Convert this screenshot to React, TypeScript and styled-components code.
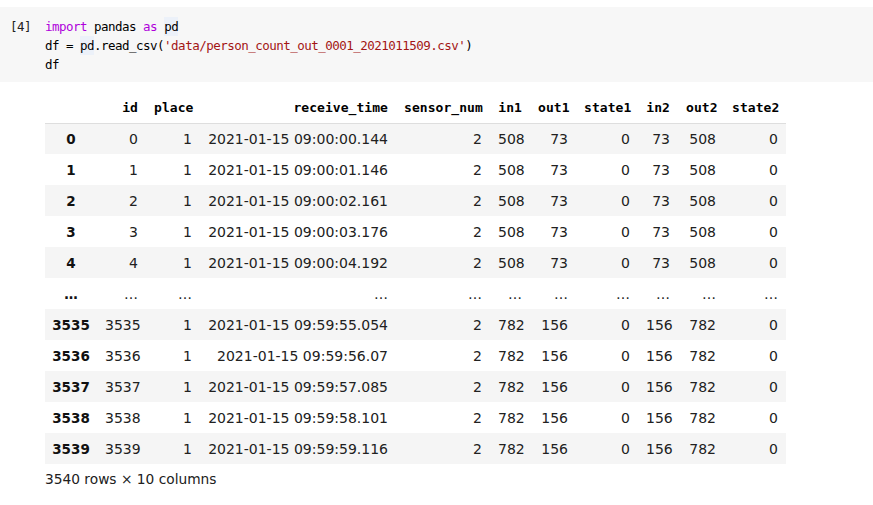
import React from "react";
import styled, { createGlobalStyle } from "styled-components";

const Global = createGlobalStyle`
  html, body { margin: 0; padding: 0; background: #ffffff; }
  body { font-family: "DejaVu Sans", Verdana, sans-serif; color: #212121; }
`;

const Page = styled.div`
  width: 873px;
  padding-top: 7px;
`;

const CodeCell = styled.div`
  display: flex;
  background: #f7f7f7;
  padding: 10px 0 8px 0;
`;

const Prompt = styled.div`
  width: 45px;
  box-sizing: border-box;
  padding-left: 10px;
  font-family: "DejaVu Sans Mono", "Liberation Mono", monospace;
  font-size: 12.5px;
  letter-spacing: -0.5px;
  line-height: 19px;
  color: #212121;
`;

const Code = styled.pre`
  margin: 0;
  font-family: "DejaVu Sans Mono", "Liberation Mono", monospace;
  font-size: 12.5px;
  letter-spacing: -0.52px;
  line-height: 19px;
  color: #000000;
`;

const Kw = styled.span`
  color: #af00db;
`;

const Str = styled.span`
  color: #a31515;
`;

const Mark = styled.span`
  background: #ecf1f9;
  padding: 2px 0;
`;

const Output = styled.div`
  padding-left: 45px;
  margin-top: 10px;
`;

const Table = styled.table`
  border-collapse: collapse;
  table-layout: fixed;
  width: 741px;
  font-size: 14px;
`;

const HeadCell = styled.th`
  height: 31px;
  padding: 0 8px;
  box-sizing: border-box;
  text-align: right;
  font-family: "DejaVu Sans Mono", "Liberation Mono", monospace;
  font-weight: bold;
  font-size: 13px;
  letter-spacing: 0.05px;
  color: #000000;
  border-bottom: 1px solid #dedede;
  white-space: nowrap;
`;

const Row = styled.tr`
  height: 31px;
  &:nth-child(odd) {
    background: #f5f5f5;
  }
`;

const IndexCell = styled.th`
  padding: 0;
  text-align: center;
  font-weight: bold;
  font-size: 13.5px;
  color: #111111;
  white-space: nowrap;
`;

const Cell = styled.td`
  padding: 0 8px;
  text-align: right;
  font-size: 14px;
  color: #212121;
  white-space: nowrap;
`;

const Footer = styled.div`
  margin-top: 6px;
  font-size: 13.75px;
  color: #212121;
  line-height: 18px;
`;

const widths = [52, 49, 54, 196, 94, 40, 46, 62, 40, 46, 62];
const headers = ["", "id", "place", "receive_time", "sensor_num", "in1", "out1", "state1", "in2", "out2", "state2"];

type R = { idx: string; cells: string[] };

const rows: R[] = [
  { idx: "0", cells: ["0", "1", "2021-01-15 09:00:00.144", "2", "508", "73", "0", "73", "508", "0"] },
  { idx: "1", cells: ["1", "1", "2021-01-15 09:00:01.146", "2", "508", "73", "0", "73", "508", "0"] },
  { idx: "2", cells: ["2", "1", "2021-01-15 09:00:02.161", "2", "508", "73", "0", "73", "508", "0"] },
  { idx: "3", cells: ["3", "1", "2021-01-15 09:00:03.176", "2", "508", "73", "0", "73", "508", "0"] },
  { idx: "4", cells: ["4", "1", "2021-01-15 09:00:04.192", "2", "508", "73", "0", "73", "508", "0"] },
  { idx: "...", cells: ["...", "...", "...", "...", "...", "...", "...", "...", "...", "..."] },
  { idx: "3535", cells: ["3535", "1", "2021-01-15 09:59:55.054", "2", "782", "156", "0", "156", "782", "0"] },
  { idx: "3536", cells: ["3536", "1", "2021-01-15 09:59:56.07", "2", "782", "156", "0", "156", "782", "0"] },
  { idx: "3537", cells: ["3537", "1", "2021-01-15 09:59:57.085", "2", "782", "156", "0", "156", "782", "0"] },
  { idx: "3538", cells: ["3538", "1", "2021-01-15 09:59:58.101", "2", "782", "156", "0", "156", "782", "0"] },
  { idx: "3539", cells: ["3539", "1", "2021-01-15 09:59:59.116", "2", "782", "156", "0", "156", "782", "0"] },
];

export default function App() {
  return (
    <Page>
      <Global />
      <CodeCell>
        <Prompt>[4]</Prompt>
        <Code>
          <Kw>import</Kw> pandas <Kw>as</Kw> <Mark>pd</Mark>
          {"\n"}df = <Mark>pd</Mark>.read_csv(<Str>'data/person_count_out_0001_2021011509.csv'</Str>)
          {"\n"}df
        </Code>
      </CodeCell>
      <Output>
        <Table>
          <colgroup>
            {widths.map((w, i) => (
              <col key={i} style={{ width: w }} />
            ))}
          </colgroup>
          <thead>
            <tr>
              {headers.map((h, i) => (
                <HeadCell key={i}>{h}</HeadCell>
              ))}
            </tr>
          </thead>
          <tbody>
            {rows.map((r) => (
              <Row key={r.idx}>
                <IndexCell>{r.idx === "..." ? "…" : r.idx}</IndexCell>
                {r.cells.map((c, i) => (
                  <Cell key={i}>{c === "..." ? "…" : c}</Cell>
                ))}
              </Row>
            ))}
          </tbody>
        </Table>
        <Footer>3540 rows × 10 columns</Footer>
      </Output>
    </Page>
  );
}
